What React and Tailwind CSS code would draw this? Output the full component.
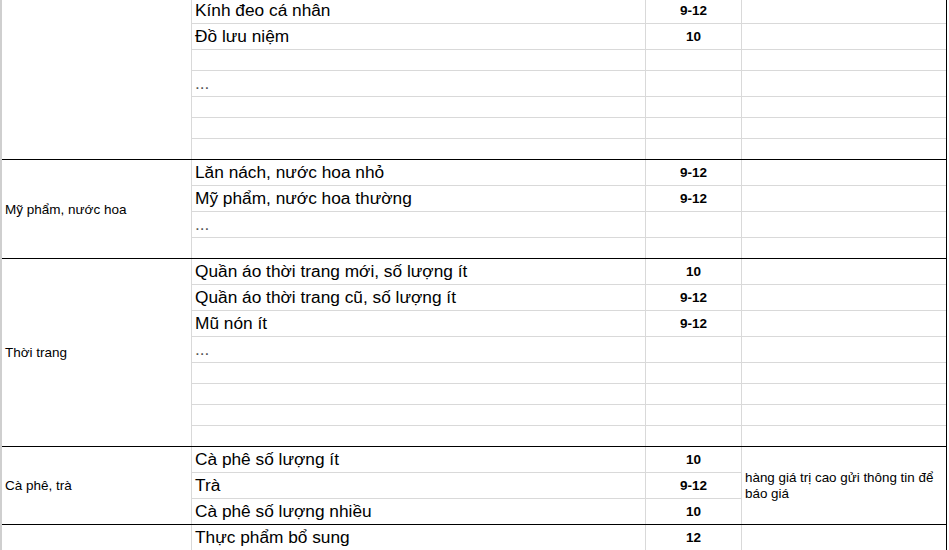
import React from "react";

const groups = [
  {
    label: "",
    rows: [
      [26, "Kính đeo cá nhân", "9-12"],
      [26, "Đồ lưu niệm", "10"],
      [21],
      [26, "..."],
      [21],
      [21],
      [21],
    ],
  },
  {
    label: "Mỹ phẩm, nước hoa",
    rows: [
      [26, "Lăn nách, nước hoa nhỏ", "9-12"],
      [26, "Mỹ phẩm, nước hoa thường", "9-12"],
      [26, "..."],
      [21],
    ],
  },
  {
    label: "Thời trang",
    rows: [
      [26, "Quần áo thời trang mới, số lượng ít", "10"],
      [26, "Quần áo thời trang cũ, số lượng ít", "9-12"],
      [26, "Mũ nón ít", "9-12"],
      [26, "..."],
      [21],
      [21],
      [21],
      [21],
    ],
  },
  {
    label: "Cà phê, trà",
    note: true,
    rows: [
      [26, "Cà phê số lượng ít", "10"],
      [26, "Trà", "9-12"],
      [26, "Cà phê số lượng nhiều", "10"],
    ],
  },
  {
    label: "",
    rows: [
      [26, "Thực phẩm bổ sung", "12"],
      [26],
      [26],
    ],
  },
];

function heightClass(h, last) {
  if (last) return h === 26 ? "h-[25px]" : "h-[20px]";
  return h === 26 ? "h-[26px]" : "h-[21px]";
}

function Row({ h, name, num, last, merged }) {
  const isDots = name === "...";
  return (
    <div
      className={`flex ${heightClass(h, last)} ${
        last ? "" : "border-b border-[#d9d9d9]"
      }`}
    >
      <div
        className={`w-[454px] shrink-0 border-r border-[#d9d9d9] pl-[3px] flex items-center text-[17.3px] whitespace-nowrap ${
          isDots ? "text-[#555]" : "text-black"
        }`}
      >
        {name}
      </div>
      <div className="w-[96px] shrink-0 border-r border-[#d9d9d9] pt-[1px] flex items-center justify-center text-[13.5px] font-bold text-black">
        {num}
      </div>
      {!merged && <div className="flex-1" />}
    </div>
  );
}

export default function App() {
  return (
    <div className="h-[550px] w-[949px] overflow-hidden bg-white font-['Liberation_Sans','Arial',sans-serif]">
      <div className="w-[947px] -mt-[2px] border-l-2 border-l-[#cfcfcf] border-r border-r-black">
        {groups.map((g, gi) => {
          const lastGroup = gi === groups.length - 1;
          return (
            <div
              key={gi}
              className={`flex ${lastGroup ? "" : "border-b border-black"}`}
            >
              <div className="w-[190px] shrink-0 border-r border-[#d9d9d9] pl-[3px] pt-[2px] flex items-center text-[13.5px] text-black whitespace-nowrap">
                {g.label}
              </div>
              <div
                className={`flex flex-col ${
                  g.note ? "w-[550px] shrink-0" : "flex-1"
                }`}
              >
                {g.rows.map((r, ri) => (
                  <Row
                    key={ri}
                    h={r[0]}
                    name={r[1]}
                    num={r[2]}
                    merged={g.note}
                    last={ri === g.rows.length - 1 && !lastGroup}
                  />
                ))}
              </div>
              {g.note && (
                <div className="flex-1 pl-[3px] flex items-center text-[13.4px] leading-[16px] text-black">
                  <span>
                    hàng giá trị cao gửi thông tin để
                    <br />
                    báo giá
                  </span>
                </div>
              )}
            </div>
          );
        })}
      </div>
    </div>
  );
}
